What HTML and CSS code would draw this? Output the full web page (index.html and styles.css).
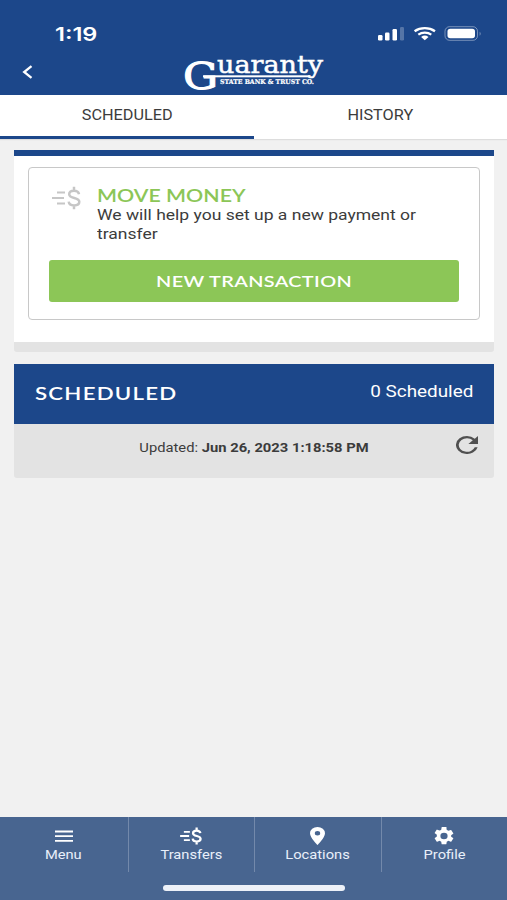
FILE: index.html
```html
<!DOCTYPE html>
<html lang="en">
<head>
  <meta charset="UTF-8" />
  <meta name="viewport" content="width=device-width, initial-scale=1.0"/>
  <title>Guaranty State Bank - Transfers</title>
  <link rel="stylesheet" href="styles.css">
</head>
<body>

<header>
  <div class="status-bar">
    <span class="time">1:19</span>
    <svg class="status-icons" width="106" height="18" viewBox="0 0 106 18">
      <g fill="#fff">
        <rect x="2" y="11" width="4.5" height="5.5" rx="1.2"/>
        <rect x="9" y="8.5" width="4.5" height="8" rx="1.2"/>
        <rect x="16.5" y="5" width="4.5" height="11.5" rx="1.2"/>
        <rect x="24" y="3" width="4" height="13.5" rx="1.2" opacity=".25"/>
        <path d="M48.8 16.2 45.1 12.9a5.6 4.5 0 0 1 7.4 0z"/>
        <rect x="71.5" y="4.7" width="27.5" height="9.6" rx="2.8"/>
        <path d="M103.6 7.8v4a2.4 2.4 0 0 0 0-4z" opacity=".4"/>
      </g>
      <g fill="none" stroke="#fff" stroke-width="2.3">
        <path d="M38.6 7.3a15.5 12.5 0 0 1 20.4 0M42.3 10.6a10 8 0 0 1 13 0"/>
        <rect x="69" y="2.7" width="32.5" height="13.6" rx="4.5" stroke-width="1" opacity=".4"/>
      </g>
    </svg>
  </div>
  <div class="title-bar">
    <svg class="back" width="12" height="14" viewBox="0 0 12 14"><path d="M9.5 1.2 2.2 7l7.3 5.8" fill="none" stroke="#fff" stroke-width="2.3"/></svg>
    <svg class="logo" width="144" height="43" viewBox="0 0 144 43" fill="#fff" stroke="#fff" font-family="'DejaVu Serif', serif">
      <text x="0" y="36.6" font-size="38" stroke-width="1" textLength="35" lengthAdjust="spacingAndGlyphs">G</text>
      <text x="34" y="21.2" font-size="23.5" stroke-width=".5" textLength="106" lengthAdjust="spacingAndGlyphs">uaranty</text>
      <rect x="20" y="23.3" width="106" height="2" stroke="none"/>
      <text x="37" y="32.2" font-size="6.6" font-weight="bold" stroke-width=".2" textLength="94" lengthAdjust="spacingAndGlyphs">STATE BANK &amp; TRUST CO.</text>
    </svg>
  </div>
</header>

<nav class="tabs">
  <a class="active"><span>SCHEDULED</span></a>
  <a><span>HISTORY</span></a>
</nav>

<main>
  <section class="card">
    <div class="box">
      <div class="intro">
        <svg class="money" width="29" height="24" viewBox="0 0 29 24" fill="none" stroke="currentColor">
          <path d="M5 6.5h8M0 12h12M5 17.5h8" stroke-width="2.1"/>
          <path d="M27 8.2C26.6 5.8 24.7 4.7 22 4.7s-4.8 1.2-4.8 3.5c0 5 10.1 2.6 10.1 7.6 0 2.4-2.3 3.6-5.2 3.6-3.1 0-5.1-1.2-5.4-3.8M22 .8v4M22 19.2v4" stroke-width="2.5"/>
        </svg>
        <div>
          <h2>MOVE MONEY</h2>
          <p>We will help you set up a new payment or<br>transfer</p>
        </div>
      </div>
      <button type="button"><span>NEW TRANSACTION</span></button>
    </div>
  </section>

  <section class="scheduled">
    <div class="scheduled-head">
      <h3>SCHEDULED</h3>
      <span class="count">0 Scheduled</span>
    </div>
    <div class="updated">
      <p>Updated: <b>Jun 26, 2023 1:18:58 PM</b></p>
      <svg class="refresh" width="22" height="18" viewBox="4 4 16 16" preserveAspectRatio="none"><path fill="#505050" d="M17.65 6.35A7.96 7.96 0 0 0 12 4a8 8 0 1 0 7.73 10h-2.08A6 6 0 1 1 12 6c1.66 0 3.14.69 4.22 1.78L13 11h7V4z"/></svg>
    </div>
  </section>
</main>

<footer>
  <div class="menu">
    <a>
      <svg width="20" height="18" viewBox="0 0 20 18"><path d="M1 4.5h18M1 9.2h18M1 13.9h18" stroke="currentColor" stroke-width="1.8"/></svg>
      <span>Menu</span>
    </a>
    <a>
      <svg width="22" height="18" viewBox="0 0 29 24" fill="none" stroke="currentColor">
        <path d="M5 6.5h8M0 12h12M5 17.5h8" stroke-width="2.5"/>
        <path d="M27 8.2C26.6 5.8 24.7 4.7 22 4.7s-4.8 1.2-4.8 3.5c0 5 10.1 2.6 10.1 7.6 0 2.4-2.3 3.6-5.2 3.6-3.1 0-5.1-1.2-5.4-3.8M22 .8v4M22 19.2v4" stroke-width="3"/>
      </svg>
      <span>Transfers</span>
    </a>
    <a>
      <svg width="15" height="17" viewBox="5 2 14 20" preserveAspectRatio="none"><path fill="currentColor" d="M12 2a7 7 0 0 0-7 7c0 5.25 7 13 7 13s7-7.75 7-13a7 7 0 0 0-7-7zm0 9.5a2.5 2.5 0 1 1 0-5 2.5 2.5 0 0 1 0 5z"/></svg>
      <span>Locations</span>
    </a>
    <a>
      <svg width="20" height="17" viewBox="2 2 20 20" preserveAspectRatio="none"><path fill="currentColor" d="M19.14 12.94c.04-.3.06-.61.06-.94s-.02-.64-.07-.94l2.03-1.58a.49.49 0 0 0 .12-.61l-1.92-3.32a.49.49 0 0 0-.59-.22l-2.39.96a7 7 0 0 0-1.62-.94l-.36-2.54A.48.48 0 0 0 13.92 2h-3.84a.47.47 0 0 0-.47.41l-.36 2.54a7.3 7.3 0 0 0-1.62.94l-2.39-.96a.48.48 0 0 0-.59.22L2.74 8.47a.47.47 0 0 0 .12.61l2.03 1.58c-.05.3-.09.63-.09.94s.02.64.07.94l-2.03 1.58a.49.49 0 0 0-.12.61l1.92 3.32c.12.22.37.29.59.22l2.39-.96c.5.38 1.03.7 1.62.94l.36 2.54c.05.24.24.41.48.41h3.84c.24 0 .44-.17.47-.41l.36-2.54a7 7 0 0 0 1.62-.94l2.39.96c.22.08.47 0 .59-.22l1.92-3.32a.47.47 0 0 0-.12-.61zM12 15.6a3.6 3.6 0 1 1 0-7.2 3.6 3.6 0 0 1 0 7.2z"/></svg>
      <span>Profile</span>
    </a>
  </div>
  <div class="home-bar"></div>
</footer>

</body>
</html>
```
FILE: styles.css
```css
* { box-sizing: border-box; }
body {
  margin: 0; height: 900px; overflow: hidden;
  display: flex; flex-direction: column;
  font-family: Roboto, sans-serif; color: #3c3c3c; background: #f1f1f1;
}
h2, h3, p { margin: 0; }

/* the type is extended, so labels are stretched sideways */
.time, .tabs span, h2, h3, p, button span, .count, .menu span {
  display: inline-block; white-space: nowrap;
  transform: scaleX(1.16);
}

header { height: 95px; background: #1c478a; color: #fff; }
.status-bar {
  height: 52px; padding: 22px 25px 0 55px;
  display: flex; justify-content: space-between; align-items: flex-start;
}
.time {
  font: 600 18.5px/24px Inter, sans-serif;
  transform: scaleX(1.27); transform-origin: left;
}
.status-icons { margin-top: 2px; }
.title-bar { height: 43px; padding-left: 22px; display: flex; }
.back { margin-top: 13px; }
.logo { margin-left: 149px; overflow: visible; }

.tabs {
  height: 44px; flex: none; display: flex; background: #fff;
  box-shadow: 0 1px 1px #ddd;
}
.tabs a {
  flex: 1; padding-top: 10px; text-align: center;
  font-size: 14px; line-height: 21px;
}
.tabs .active { border-bottom: 3px solid #1c478a; }

main { flex: 1; padding: 11px 13px 0 14px; }
.card {
  height: 202px; padding: 11px 14px;
  background: #fff; border-top: 6px solid #1c478a; border-bottom: 10px solid #e3e3e3;
  border-radius: 0 0 3px 3px;
}
.box {
  height: 153px; padding: 18px 20px 17px;
  display: flex; flex-direction: column; justify-content: space-between;
  border: 1px solid #c8c8c8; border-radius: 4px;
}
.intro { display: flex; }
.money { margin: 0 16px 0 3px; color: #c6c6c6; }
h2 {
  display: block; width: 120px; color: #8cc657;
  font: 600 16.5px/20px Lato, sans-serif;
  transform: scaleX(1.295); transform-origin: left;
}
.intro p { font-size: 15px; line-height: 19px; transform: scaleX(1.167); transform-origin: left; }
button {
  height: 42px; padding: 0; border: none; border-radius: 3px;
  background: #8cc657; color: #fff;
  font: 600 16px/20px Lato, sans-serif;
}
button span { letter-spacing: .3px; transform: scaleX(1.24); }

.scheduled { margin-top: 12px; }
.scheduled-head {
  height: 60px; padding: 0 21px;
  display: flex; justify-content: space-between;
  background: #1c478a; color: #fff;
}
h3 { font: 600 18px/59px Lato, sans-serif; letter-spacing: 1px; transform: scaleX(1.235); transform-origin: left; }
.count { font-size: 16px; line-height: 55px; transform: scaleX(1.18); transform-origin: right; }
.updated {
  height: 54px; display: grid; grid-template-columns: 60px 1fr 60px;
  background: #e3e3e3; border-radius: 0 0 3px 3px;
}
.updated p { grid-column: 2; text-align: center; font-size: 12.5px; line-height: 47px; transform: scaleX(1.18); }
.refresh { margin: 12px 0 0 22px; }

footer { height: 83px; background: #486590; color: #fff; }
.menu { height: 55px; display: flex; }
.menu a {
  flex: 1; padding-top: 10px;
  display: flex; flex-direction: column; align-items: center;
  border-right: 1px solid #7389ab;
}
.menu a:first-child { flex: 0 0 128.5px; }
.menu a:last-child { border: none; }
.menu svg { height: 18px; }
.menu span { font-size: 13px; line-height: 20px; color: #e9effa; transform: scaleX(1.13); }
.home-bar {
  width: 182px; height: 6px; margin: 13px auto 0;
  background: #edf1f8; border-radius: 3px;
}
```
